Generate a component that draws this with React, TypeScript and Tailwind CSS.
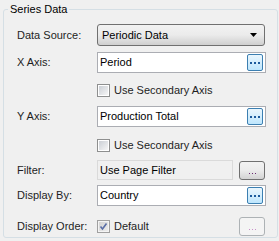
import type { ReactNode } from "react"

const font = "font-['Tahoma','Liberation_Sans',sans-serif] text-[11px] leading-[13px]"

function Label({ children }: { children: ReactNode }) {
  return <div className="w-[80px] shrink-0 text-[#1e1e1e]">{children}</div>
}

function Dots({ color, size = 2 }: { color: string; size?: number }) {
  return (
    <div className="flex gap-[2px]">
      {[0, 1, 2].map((i) => (
        <span key={i} className={size === 2 ? "block w-[2px] h-[2px]" : "block w-px h-px"} style={{ backgroundColor: color }} />
      ))}
    </div>
  )
}

function PickerBox({ value }: { value: string }) {
  return (
    <div className="w-[169px] h-[21px] border border-[#abadb3] bg-white flex items-center justify-between pl-[2px] pr-[2px]">
      <span className="text-black">{value}</span>
      <div className="w-[16px] h-[17px] rounded-[2px] border border-[#3c7fb1] bg-gradient-to-b from-[#eaf6fd] to-[#bee6fd] flex items-center justify-center">
        <Dots color="#1c5a9c" />
      </div>
    </div>
  )
}

function CheckBox({ checked, muted, label }: { checked?: boolean; muted?: boolean; label: string }) {
  return (
    <div className="flex items-center gap-[4px]">
      <div className={`w-[13px] h-[13px] border p-px ${muted ? "border-[#a0a0a0] bg-[#f4f4f4]" : "border-[#8e8f8f] bg-white"}`}>
        <div
          className={`w-full h-full flex items-center justify-center bg-gradient-to-br ${
            muted ? "from-[#d2d2d2] to-[#ececec]" : "from-[#cbcfd5] to-[#f6f6f6]"
          }`}
        >
          {checked && (
            <svg width="9" height="9" viewBox="0 0 9 9">
              <path d="M1.5 4.5 L3.5 7 L7.5 1.5" fill="none" stroke="#5a6ea6" strokeWidth="1.6" />
            </svg>
          )}
        </div>
      </div>
      <span className="text-[#1e1e1e]">{label}</span>
    </div>
  )
}

function SmallButton({ disabled }: { disabled?: boolean }) {
  return (
    <div
      className={`w-[26px] h-[19px] rounded-[3px] border flex items-end justify-center pb-[5px] ${
        disabled
          ? "border-[#adb2b5] bg-[#f4f4f4]"
          : "border-[#707070] bg-gradient-to-b from-[#f2f2f2] via-[#ebebeb] to-[#d3d3d3]"
      }`}
    >
      <Dots color={disabled ? "#c98fc9" : "#6b2b73"} size={1} />
    </div>
  )
}

export default function App() {
  return (
    <div className={`w-[279px] h-[241px] bg-[#f0f0f0] pl-[3px] pr-[1px] pt-[9px] pb-[3px] ${font}`}>
      <div className="relative h-full border border-[#d5dfe5] rounded-[3px] pl-[13px] pt-[14px]">
        <span className="absolute -top-[7px] left-[4px] px-[2px] bg-[#f0f0f0] text-black">Series Data</span>

        {/* Data source */}
        <div className="flex items-center">
          <Label>Data Source:</Label>
          <div className="w-[168px] h-[22px] rounded-[3px] border border-[#707070] bg-gradient-to-b from-[#f2f2f2] via-[#ebebeb] to-[#cfcfcf] flex items-center justify-between pl-[4px] pr-[7px]">
            <span className="text-black">Periodic Data</span>
            <svg width="7" height="4" viewBox="0 0 7 4">
              <path d="M0 0 H7 L3.5 4 Z" fill="#000" />
            </svg>
          </div>
        </div>

        <div className="flex items-center mt-[6px]">
          <Label>X Axis:</Label>
          <PickerBox value="Period" />
        </div>
        <div className="pl-[80px] mt-[11px]">
          <CheckBox label="Use Secondary Axis" />
        </div>

        <div className="flex items-center mt-[9px]">
          <Label>Y Axis:</Label>
          <PickerBox value="Production Total" />
        </div>
        <div className="pl-[80px] mt-[12px]">
          <CheckBox label="Use Secondary Axis" />
        </div>

        <div className="flex items-center mt-[8px]">
          <Label>Filter:</Label>
          <div className="w-[136px] h-[20px] border border-[#dadada] bg-[#f0f0f0] flex items-center pl-[2px] text-black">Use Page Filter</div>
          <div className="ml-[6px]">
            <SmallButton />
          </div>
        </div>

        <div className="flex items-center mt-[5px]">
          <Label>Display By:</Label>
          <PickerBox value="Country" />
        </div>

        <div className="flex items-center mt-[11px]">
          <Label>Display Order:</Label>
          <div className="w-[142px]">
            <CheckBox checked muted label="Default" />
          </div>
          <SmallButton disabled />
        </div>
      </div>
    </div>
  )
}
